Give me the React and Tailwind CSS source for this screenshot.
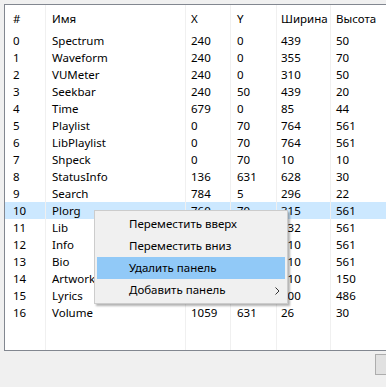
import React from "react";

const rows = [
  ["0", "Spectrum", "240", "0", "439", "50"],
  ["1", "Waveform", "240", "0", "355", "70"],
  ["2", "VUMeter", "240", "0", "310", "50"],
  ["3", "Seekbar", "240", "50", "439", "20"],
  ["4", "Time", "679", "0", "85", "44"],
  ["5", "Playlist", "0", "70", "764", "561"],
  ["6", "LibPlaylist", "0", "70", "764", "561"],
  ["7", "Shpeck", "0", "70", "10", "10"],
  ["8", "StatusInfo", "136", "631", "628", "30"],
  ["9", "Search", "784", "5", "296", "22"],
  ["10", "Plorg", "760", "70", "315", "561"],
  ["11", "Lib", "0", "70", "432", "561"],
  ["12", "Info", "0", "70", "310", "561"],
  ["13", "Bio", "0", "70", "310", "561"],
  ["14", "Artwork", "0", "70", "310", "150"],
  ["15", "Lyrics", "0", "70", "500", "486"],
  ["16", "Volume", "1059", "631", "26", "30"],
];

const cols = [
  { title: "#", w: "w-[41px]", pl: "pl-[8px]" },
  { title: "Имя", w: "w-[140px]", pl: "pl-[6px]" },
  { title: "X", w: "w-[45px]", pl: "pl-[5px]" },
  { title: "Y", w: "w-[46px]", pl: "pl-[6px]" },
  { title: "Ширина", w: "w-[54px]", pl: "pl-[4px]" },
  { title: "Высота", w: "w-[70px]", pl: "pl-[5px]" },
];

export default function App() {
  return (
    <div
      className="relative w-[386px] h-[387px] overflow-hidden bg-[#f0f0f0] text-[11.5px] text-black"
      style={{ fontFamily: '"Segoe UI", "Noto Sans", sans-serif' }}
    >
      <div className="pt-[4px] pl-[4px]">
        <div className="flex h-[347px] w-[420px] border border-[#828790] bg-white">
          {cols.map((c, ci) => (
            <div key={ci} className={`${c.w} flex flex-col border-r border-[#f0f0f0] shrink-0 overflow-hidden`}>
              <div className={`h-[27px] flex items-center ${c.pl} leading-none whitespace-nowrap`}>{c.title}</div>
              {rows.map((r, ri) => (
                <div
                  key={ri}
                  className={`h-[17px] flex items-center ${c.pl} leading-none whitespace-nowrap ${ri === 10 ? "bg-[#cce8ff]" : ""}`}
                >
                  {r[ci]}
                </div>
              ))}
            </div>
          ))}
        </div>
      </div>
      <div className="absolute left-[375px] top-[354px] w-[20px] h-[21px] border border-[#adadad] bg-[#e1e1e1]" />
      <div className="absolute left-[94px] top-[210px] w-[194px] border border-[#cccccc] bg-[#f0f0f0] p-[2px] shadow-[2px_2px_2px_rgba(0,0,0,0.3)]">
        {["Переместить вверх", "Переместить вниз", "Удалить панель", "Добавить панель"].map((t, i) => (
          <div
            key={i}
            className={`relative h-[22px] flex items-center pl-[32px] leading-none ${i === 2 ? "bg-[#91c9f7]" : ""}`}
          >
            {t}
            {i === 3 && (
              <svg className="absolute left-[178px] top-[8px]" width="5" height="8" viewBox="0 0 5 8">
                <path d="M0.5 0.5 L4 4 L0.5 7.5" fill="none" stroke="#333" strokeWidth="1" />
              </svg>
            )}
          </div>
        ))}
      </div>
    </div>
  );
}
